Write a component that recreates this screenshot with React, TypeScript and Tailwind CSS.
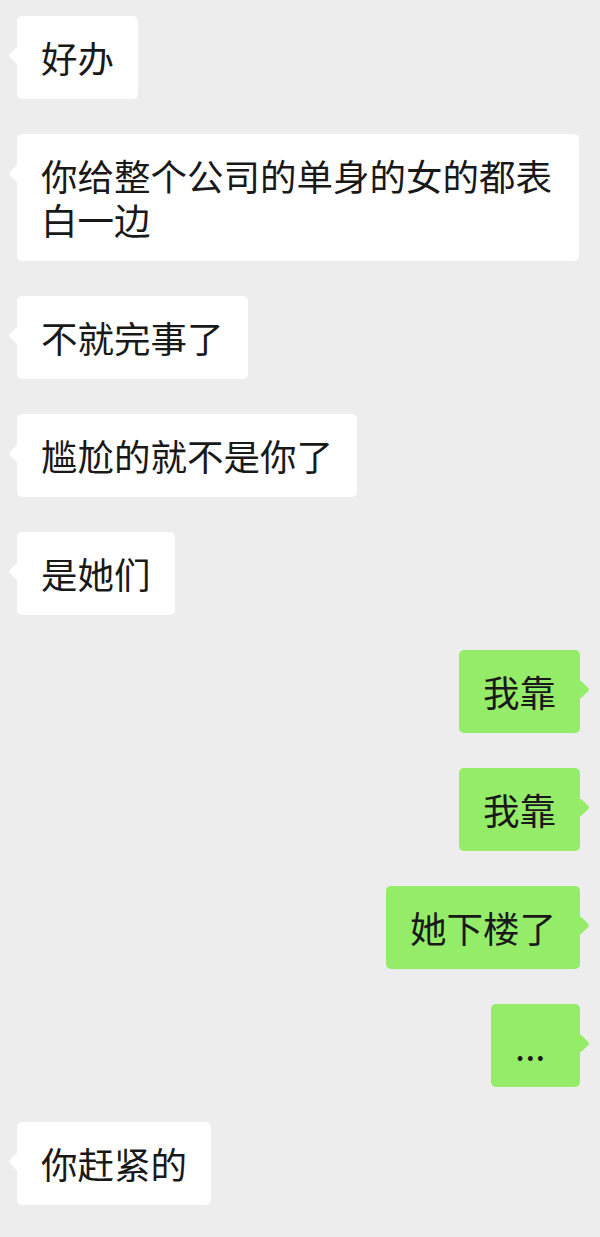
import React from 'react';

interface Message {
  text: string;
  mine: boolean;
}

const messages: Message[] = [
  { text: '好办', mine: false },
  { text: '你给整个公司的单身的女的都表白一边', mine: false },
  { text: '不就完事了', mine: false },
  { text: '尴尬的就不是你了', mine: false },
  { text: '是她们', mine: false },
  { text: '我靠', mine: true },
  { text: '我靠', mine: true },
  { text: '她下楼了', mine: true },
  { text: '...', mine: true },
  { text: '你赶紧的', mine: false },
];

const Bubble = ({ text, mine }: Message) => (
  <div className={mine ? 'flex justify-end' : 'flex justify-start'}>
    <div
      className={
        mine
          ? 'relative max-w-[562px] min-w-[89px] rounded-[5px] bg-[#95ec69] px-[24px] pt-[20px] pb-[19px]'
          : 'relative max-w-[562px] min-w-[89px] rounded-[5px] bg-white px-[24px] pt-[20px] pb-[19px]'
      }
    >
      {/* little tail pointing at the avatar side */}
      <span
        className={
          mine
            ? 'absolute top-[33px] -right-[6.5px] h-[13px] w-[13px] rotate-45 rounded-[2px] bg-[#95ec69]'
            : 'absolute top-[33px] -left-[6.5px] h-[13px] w-[13px] rotate-45 rounded-[2px] bg-white'
        }
      />
      <p className="relative text-[36.5px] leading-[44px] text-[#191919] break-all">{text}</p>
    </div>
  </div>
);

const App = () => {
  return (
    <div
      className="min-h-screen bg-[#ededed] pt-[16px] pb-[32px] pl-[17px] pr-[20px]"
      style={{ fontFamily: '"Noto Sans CJK SC", "Noto Sans", sans-serif' }}
    >
      <div className="flex flex-col gap-[35px]">
        {messages.map((m, i) => (
          <Bubble key={i} text={m.text} mine={m.mine} />
        ))}
      </div>
    </div>
  );
};

export default App;
